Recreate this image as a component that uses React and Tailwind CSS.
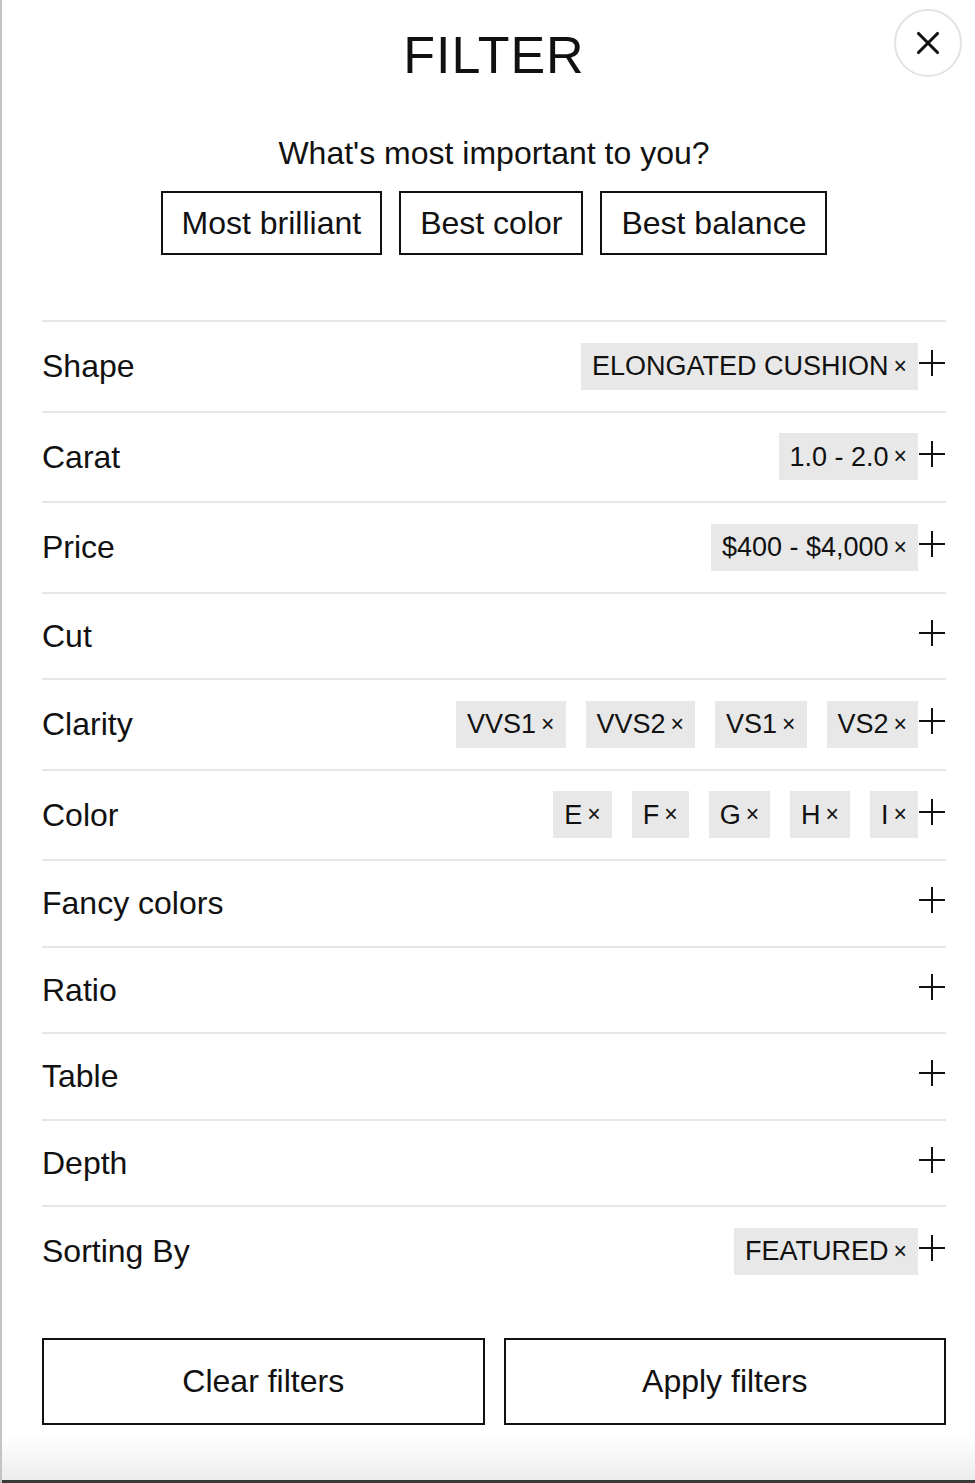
import { X } from "lucide-react";

const presets = ["Most brilliant", "Best color", "Best balance"];

const rows = [
  { label: "Shape", chips: ["ELONGATED CUSHION"] },
  { label: "Carat", chips: ["1.0 - 2.0"] },
  { label: "Price", chips: ["$400 - $4,000"] },
  { label: "Cut", chips: [] },
  { label: "Clarity", chips: ["VVS1", "VVS2", "VS1", "VS2"] },
  { label: "Color", chips: ["E", "F", "G", "H", "I"] },
  { label: "Fancy colors", chips: [] },
  { label: "Ratio", chips: [] },
  { label: "Table", chips: [] },
  { label: "Depth", chips: [] },
  { label: "Sorting By", chips: ["FEATURED"] },
];

const PlusIcon = () => (
  <svg width="28" height="28" viewBox="0 0 28 28" className="-mt-[6px] shrink-0">
    <path d="M14 1v26M1 14h26" stroke="#111" strokeWidth="2" fill="none" />
  </svg>
);

const Chip = ({ text }) => (
  <span className="flex h-[47px] items-center gap-[5px] bg-[#e8e8e8] px-[11px] text-[27px] text-[#111]">
    {text}
    <span className="text-[23px] leading-none">×</span>
  </span>
);

const FilterRow = ({ label, chips }) => (
  <div
    className={`flex items-center justify-between border-t-2 border-[#e6e6e6] ${
      chips.length ? "h-[90.5px]" : "h-[86.5px]"
    }`}
  >
    <span className="text-[32px] text-[#111]">{label}</span>
    <div className="flex items-center">
      <div className="flex items-center gap-[20px]">
        {chips.map((c) => (
          <Chip key={c} text={c} />
        ))}
      </div>
      <PlusIcon />
    </div>
  </div>
);

export default function App() {
  return (
    <div
      className="relative min-h-[1483px] w-[975px] border-l-2 border-[#c4c4c4] bg-white pl-[40px] pr-[29px]"
      style={{ fontFamily: '"Liberation Sans", Arial, sans-serif' }}
    >
      {/* Close */}
      <button className="absolute right-[13px] top-[9px] flex h-[68px] w-[68px] items-center justify-center rounded-full border-2 border-[#e3e3e3] bg-white">
        <X size={38} strokeWidth={2} color="#111" />
      </button>

      <h1 className="pt-[27px] text-center text-[52px] leading-[56px] tracking-[1px] text-[#111]">
        FILTER
      </h1>

      <p className="mt-[50px] text-center text-[32px] leading-[40px] text-[#111]">
        What's most important to you?
      </p>

      <div className="mt-[18px] flex justify-center gap-[17px]">
        {presets.map((p) => (
          <button
            key={p}
            className="h-[64px] border-2 border-[#111] px-[19px] text-[32px] text-[#111]"
          >
            {p}
          </button>
        ))}
      </div>

      <div className="mt-[65px]">
        {rows.map((r) => (
          <FilterRow key={r.label} label={r.label} chips={r.chips} />
        ))}
      </div>

      <div className="mt-[42px] grid grid-cols-2 gap-[19px]">
        <button className="h-[87px] border-2 border-[#111] text-[32px] text-[#111]">
          Clear filters
        </button>
        <button className="h-[87px] border-2 border-[#111] text-[32px] text-[#111]">
          Apply filters
        </button>
      </div>

      {/* bottom fade */}
      <div className="absolute bottom-0 left-0 right-0 h-[48px] border-b-[3px] border-[#3a3a3a] bg-gradient-to-b from-white to-[#ececec]" />
    </div>
  );
}
